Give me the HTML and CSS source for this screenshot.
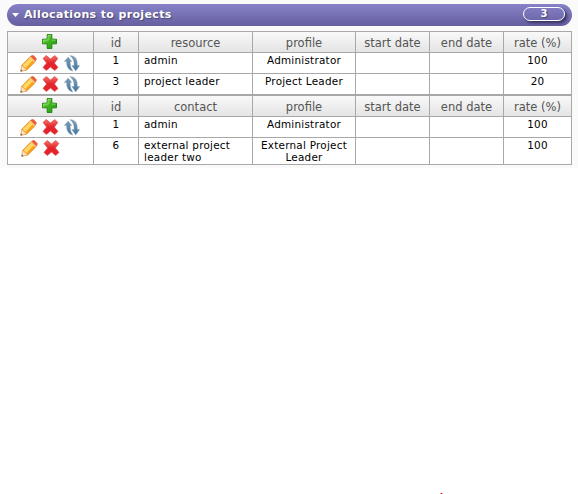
FILE: index.html
```
<!DOCTYPE html>
<html lang="en">
<head>
<meta charset="utf-8">
<title>Allocations to projects</title>
<link rel="stylesheet" href="styles.css">
</head>
<body>
<svg width="0" height="0" class="defs" aria-hidden="true">
  <defs>
    <linearGradient id="gGreen" x1="0" y1="0" x2="1" y2="1"><stop offset="0" stop-color="#8be052"/><stop offset=".5" stop-color="#3db520"/><stop offset="1" stop-color="#189b0c"/></linearGradient>
    <linearGradient id="gRed" x1="0" y1="0" x2="0" y2="1"><stop offset="0" stop-color="#f4736a"/><stop offset=".5" stop-color="#e3242b"/><stop offset="1" stop-color="#e5232b"/></linearGradient>
    <linearGradient id="gBlue" x1="0" y1="0" x2="0" y2="1"><stop offset="0" stop-color="#7f9fb8"/><stop offset="1" stop-color="#47759a"/></linearGradient>
    <symbol id="plus" viewBox="0 0 16 16"><path d="M5.500 .5h5v5h5v5h-5v5h-5v-5h-5v-5h5z" fill="url(#gGreen)" stroke="#21800f"/><path d="M6.500 6.500V1.500h3M1.500 9V6.500h5M10.500 6.500h4" fill="none" stroke="#a5e67d" stroke-opacity=".7"/></symbol>
    <symbol id="pencil" viewBox="0 0 17 17"><path d="M.8 16.200 1.700 10.300 10.200 1.600l5.300 5-8.900 8.600z" fill="#f9a21f" stroke="#dd8f2c" stroke-width=".7"/><path d="M2.700 10.200 10.500 2.500l2.600 2.400-7.900 8z" fill="#ffd966"/><path d="M.8 16.200 1.800 10.500l4.700 4.500z" fill="#f9e4c8" stroke="#dba86e" stroke-width=".5"/><path d="m.5 16.500.5-2 1.400 1.400z" fill="#5b463a"/><path d="m10.300 1.900 1.300-1.300q1-.6 2 .1l2.300 2.200q.9 1 .2 2.100l-1.300 1.400z" fill="#ef5b38" stroke="#d9682c" stroke-width=".6"/><path d="m9.400 2.700 1.100-1.100 5.100 4.800-1.100 1.200z" fill="#f8ca80"/></symbol>
    <symbol id="cross" viewBox="0 0 16 16"><path d="M3.800.5 8 4 12.200.5l3.200 2.900L11.900 8l3.600 4.400-3.300 3.100L8 12.100l-4.200 3.400-3.300-3.100L4.100 8 .5 3.400z" fill="url(#gRed)" stroke="#dd4a4e" stroke-width=".7" stroke-linejoin="round"/></symbol>
    <symbol id="swap" viewBox="0 0 16 17"><path d="M4.200 2.100 7.800 6.600H6.200Q5.900 12 8.800 16.200 2.300 14.500 2.500 6.600H.3zM5.800.5Q13.800.5 13.400 10.500h2.300l-4 5.400-3.900-5.400h2.300Q10.500 4 5.800.5z" fill="url(#gBlue)" stroke="#7fa3bd" stroke-width=".4"/></symbol>
  </defs>
</svg>
<main class="panel">
  <header class="bar">
    <svg class="caret" width="7" height="4" viewBox="0 0 7 4"><path d="M0 0h7L3.500 4z" fill="#fff"/></svg>
    <h1 class="title">Allocations to projects</h1>
    <span class="count">3</span>
  </header>
  <section class="grid">
    <div class="row head"><div class="tools"><svg class="plus"><use href="#plus"/></svg></div><div>id</div><div>resource</div><div>profile</div><div>start date</div><div>end date</div><div>rate (%)</div></div>
    <div class="row"><div class="tools"><svg class="pencil"><use href="#pencil"/></svg><svg class="cross"><use href="#cross"/></svg><svg class="swap"><use href="#swap"/></svg></div><div>1</div><div class="name">admin</div><div>Administrator</div><div></div><div></div><div>100</div></div>
    <div class="row"><div class="tools"><svg class="pencil"><use href="#pencil"/></svg><svg class="cross"><use href="#cross"/></svg><svg class="swap"><use href="#swap"/></svg></div><div>3</div><div class="name">project leader</div><div>Project Leader</div><div></div><div></div><div>20</div></div>
  </section>
  <section class="grid">
    <div class="row head"><div class="tools"><svg class="plus"><use href="#plus"/></svg></div><div>id</div><div>contact</div><div>profile</div><div>start date</div><div>end date</div><div>rate (%)</div></div>
    <div class="row"><div class="tools"><svg class="pencil"><use href="#pencil"/></svg><svg class="cross"><use href="#cross"/></svg><svg class="swap"><use href="#swap"/></svg></div><div>1</div><div class="name">admin</div><div>Administrator</div><div></div><div></div><div>100</div></div>
    <div class="row tall"><div class="tools pair"><svg class="pencil"><use href="#pencil"/></svg><svg class="cross"><use href="#cross"/></svg></div><div>6</div><div class="name">external project<br>leader two</div><div>External Project<br>Leader</div><div></div><div></div><div>100</div></div>
  </section>
</main>
<i class="speck"></i>
</body>
</html>
```
FILE: styles.css
```
* { box-sizing: border-box; }
body {
  margin: 0;
  height: 494px;
  overflow: hidden;
  display: flex;
  flex-direction: column;
  background: #fff;
  font-family: Verdana, "DejaVu Sans", sans-serif;
  font-size: 10.4px;
  letter-spacing: .25px;
  color: #000;
}
.defs { position: absolute; }
.panel {
  height: 168px;
  padding: 4px 6px 0 7px;
  background: #fafafa;
}
.bar {
  display: flex;
  align-items: center;
  height: 22px;
  margin-bottom: 5px;
  padding: 0 7px 0 5px;
  border-radius: 11px;
  background: linear-gradient(#8782c8, #655f9f);
  color: #fff;
}
.caret { margin-right: 5px; }
.title {
  margin: 0;
  font-size: 11px;
  line-height: 20px;
  font-weight: bold;
  letter-spacing: .36px;
  text-shadow: 1px 1px 1px #4b4675;
}
.count {
  width: 42px;
  height: 14px;
  margin: -2px 0 0 auto;
  border: 1px solid #fff;
  border-radius: 7px;
  font-size: 10px;
  font-weight: bold;
  letter-spacing: 0;
  line-height: 12px;
  text-align: center;
  box-shadow: 2px 2px 3px #35315c;
  text-shadow: 1px 1px 1px #4b4675;
}
.grid {
  width: 565px;
  border-right: 1px solid #a8a8a8;
  border-bottom: 1px solid #a8a8a8;
  background: #fff;
}
.row {
  display: grid;
  grid-template-columns: 86px 45px 114px 103px 74px 74px 68px;
  height: 21px;
  line-height: 12px;
}
.tall { height: 27px; }
.row > div {
  padding-top: 1px;
  border-top: 1px solid #a8a8a8;
  border-left: 1px solid #a8a8a8;
  text-align: center;
  white-space: nowrap;
}
.row > .name { padding-left: 5px; text-align: left; }
.head {
  background: linear-gradient(#fafafa, #e4e4e4);
  color: #555;
  font-size: 11.5px;
  letter-spacing: 0;
  line-height: 20px;
}
.row > .tools {
  display: flex;
  padding-top: 2px;
  padding-left: 12px;
  gap: 5px;
}
.row.head > .tools { padding-left: 34px; }
.row > .pair { padding-left: 13px; }
.plus { width: 15px; height: 15px; }
.pencil { width: 17px; height: 17px; }
.cross { width: 17px; height: 16px; }
.swap { width: 16px; height: 17px; }
.speck {
  width: 1px;
  height: 1px;
  margin: auto 0 0 441px;
  background: #b00018;
  box-shadow: 1px 0 #f6b9c0, -1px 0 #f6b9c0;
}
```
